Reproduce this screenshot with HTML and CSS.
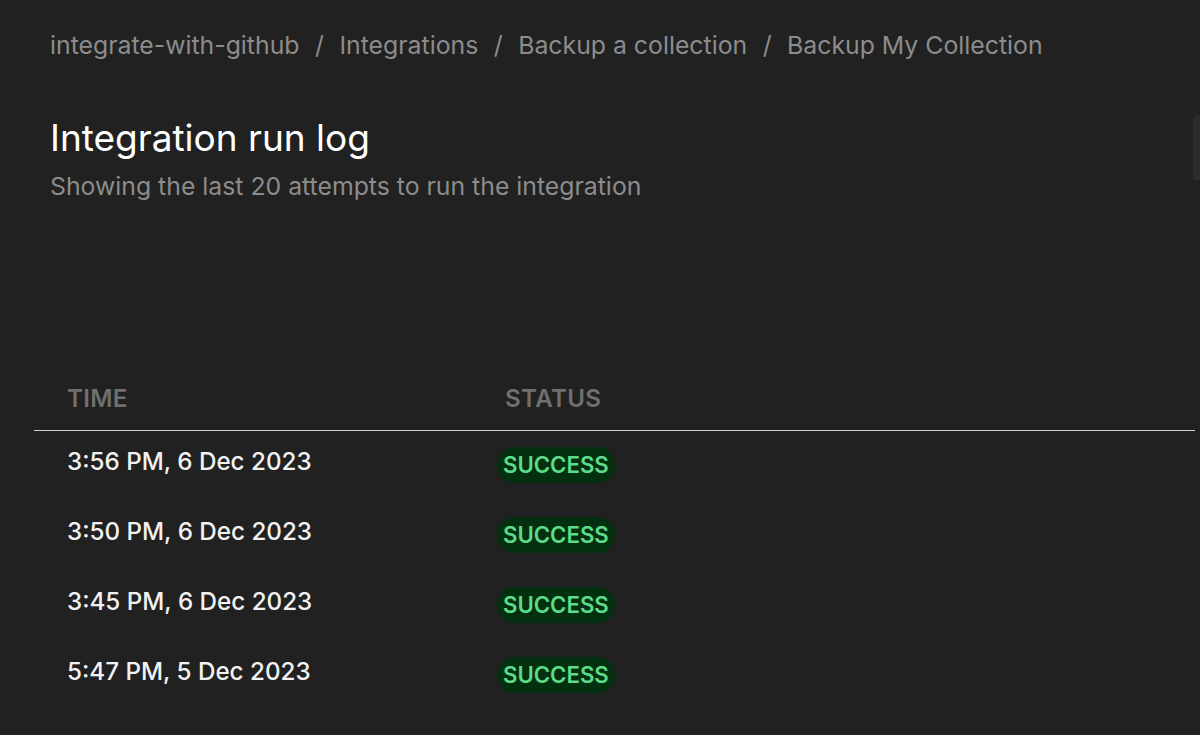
FILE: index.html
```html
<!DOCTYPE html>
<html lang="en">
<head>
  <meta charset="UTF-8" />
  <meta name="viewport" content="width=device-width, initial-scale=1.0"/>
  <title>Integration run log</title>
  <link rel="stylesheet" href="styles.css">
</head>
<body>

  <!-- Breadcrumb -->
  <nav class="breadcrumb">
    <a href="#">integrate-with-github</a>
    <span class="sep">/</span>
    <a href="#">Integrations</a>
    <span class="sep">/</span>
    <a href="#">Backup a collection</a>
    <span class="sep">/</span>
    <a href="#">Backup My Collection</a>
  </nav>

  <!-- Heading -->
  <div class="page-head">
    <h1>Integration run log</h1>
    <p>Showing the last 20 attempts to run the integration</p>
  </div>

  <!-- Run log -->
  <div class="run-table">
    <div class="run-row run-head">
      <div class="col-time">TIME</div>
      <div class="col-status">STATUS</div>
    </div>
    <div class="run-row">
      <div class="col-time">3:56 PM, 6 Dec 2023</div>
      <div class="col-status"><span class="badge">SUCCESS</span></div>
    </div>
    <div class="run-row">
      <div class="col-time">3:50 PM, 6 Dec 2023</div>
      <div class="col-status"><span class="badge">SUCCESS</span></div>
    </div>
    <div class="run-row">
      <div class="col-time">3:45 PM, 6 Dec 2023</div>
      <div class="col-status"><span class="badge">SUCCESS</span></div>
    </div>
    <div class="run-row">
      <div class="col-time">5:47 PM, 5 Dec 2023</div>
      <div class="col-status"><span class="badge">SUCCESS</span></div>
    </div>
  </div>

  <div class="scroll-thumb"></div>
</body>
</html>
```

FILE: styles.css
```css
:root {
  --bg: #212121;
  --text: #f2f2f2;
  --muted: #8c8c8c;
  --head: #6f6f6f;
  --green: #5cdb8b;
  --green-bg: #03300f;
}

* {
  margin: 0;
  padding: 0;
  box-sizing: border-box;
}

html, body {
  height: 100%;
  overflow: hidden;
}

body {
  font-family: 'Inter', 'Noto Sans', sans-serif;
  background-color: var(--bg);
  color: var(--text);
  padding: 30px 5px 0 34px;
}

/* Breadcrumb */
.breadcrumb {
  display: flex;
  align-items: center;
  gap: 15.5px;
  padding-left: 16px;
  font-size: 24.8px;
  line-height: 30px;
  color: var(--muted);
}

.breadcrumb a {
  color: var(--muted);
  text-decoration: none;
}

/* Heading */
.page-head {
  padding-left: 16px;
  margin-top: 56px;
}

.page-head h1 {
  font-size: 37px;
  line-height: 44px;
  font-weight: 400;
  color: #ffffff;
}

.page-head p {
  margin-top: 12px;
  font-size: 24.8px;
  line-height: 28px;
  color: var(--muted);
}

/* Table */
.run-table {
  margin-top: 185px;
}

.run-row {
  display: flex;
  align-items: flex-start;
  height: 70px;
  padding-top: 17px;
  font-size: 24.2px;
  line-height: 28px;
  font-weight: 500;
}

.run-head {
  height: auto;
  padding-top: 0;
  padding-bottom: 17px;
  border-bottom: 1.5px solid #d0d0d0;
  color: var(--head);
  font-weight: 600;
  letter-spacing: 0.3px;
}

.col-time {
  width: 463px;
  padding-left: 33px;
}

.run-head .col-status {
  padding-left: 8px;
}

.badge {
  display: inline-block;
  margin-top: -1px;
  padding: 4px 6px;
  border-radius: 18px;
  background-color: var(--green-bg);
  color: var(--green);
  font-size: 22.2px;
  font-weight: 600;
  line-height: 28px;
}

/* Scrollbar thumb */
.scroll-thumb {
  position: absolute;
  top: 115px;
  right: 0;
  width: 7px;
  height: 65px;
  border-radius: 4px 0 0 4px;
  background-color: #2c2c2c;
}
```
